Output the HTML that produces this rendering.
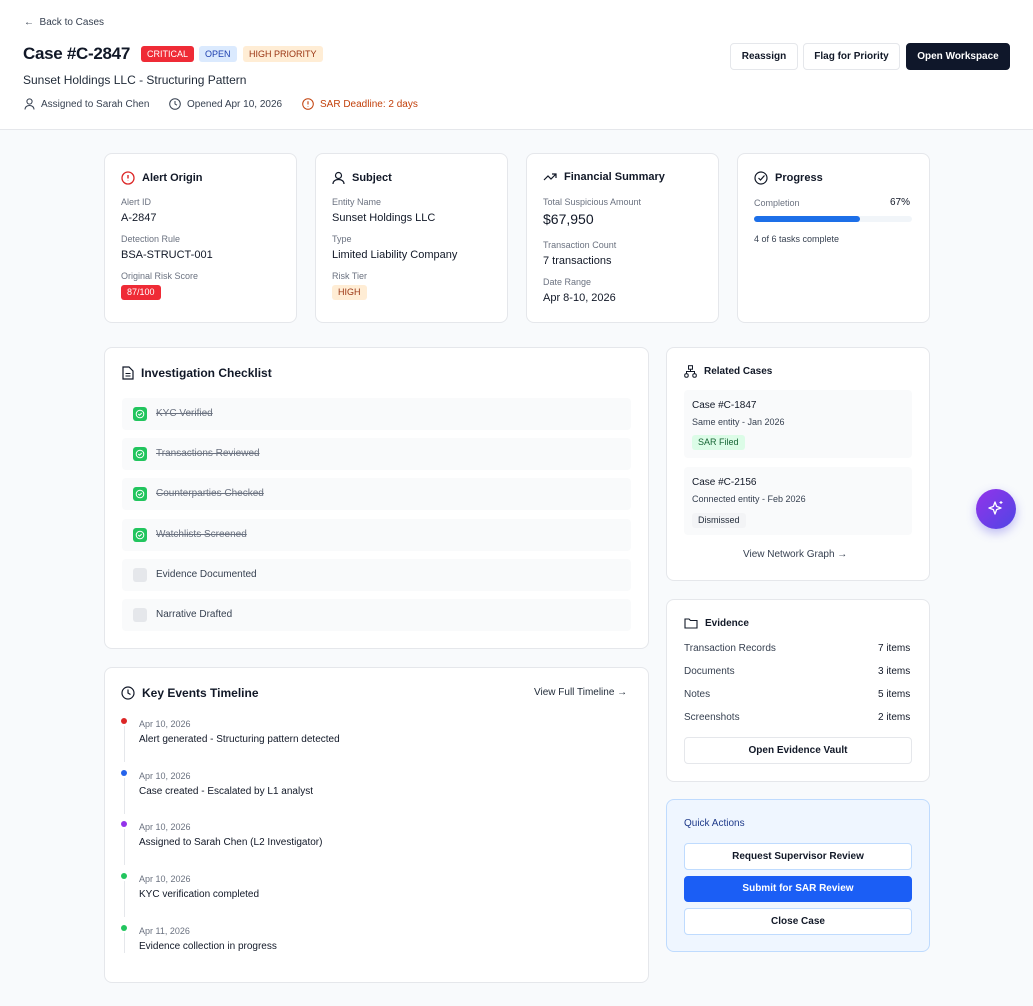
<!DOCTYPE html>
<html><head><meta charset="utf-8"><style>
*{box-sizing:border-box;margin:0;padding:0}
body{width:1033px;height:1006px;background:#f8fafc;font-family:"Liberation Sans",Arial,sans-serif;color:#111827;position:relative;overflow:hidden}
.a{position:absolute}
.hdr{left:0;top:0;width:1033px;height:130px;background:#fff;border-bottom:1px solid #e5e7eb}
.card{position:absolute;background:#fff;border:1px solid #e5e7eb;border-radius:8px}
.t{font-size:11px;color:#111827;white-space:nowrap;display:flex;align-items:center;gap:6px}
.lbl{font-size:9px;color:#6b7280;position:absolute;white-space:nowrap}
.val{font-size:11px;color:#111827;position:absolute;white-space:nowrap}
.h{font-size:11px;font-weight:bold;position:absolute;white-space:nowrap;display:flex;align-items:center;gap:7px}
.badge{position:absolute;font-size:9px;border-radius:3px;padding:0 6px;height:16px;line-height:16px}
.btn{position:absolute;border:1px solid #e5e7eb;border-radius:4px;background:#fff;font-size:10px;font-weight:bold;text-align:center}
.ci{position:absolute;left:122px;width:509px;height:32px;background:#f9fafb;border-radius:4px;font-size:10px;color:#374151}
.ci .b{position:absolute;left:11px;top:9px;width:14px;height:14px;border-radius:3px;background:#22c55e}
.ci .e{background:#e5e7eb}
.ci span{position:absolute;left:34px;top:0;line-height:32px}
.ci.d span{text-decoration:line-through;color:#6b7280}
svg{display:block}
</style></head><body>
<div class="a hdr"></div>
<div class="a" style="left:24px;top:17px;font-size:10px;color:#374151">&#8592;&nbsp;&nbsp;Back to Cases</div>
<div class="a" style="left:23px;top:44px;font-size:17px;font-weight:bold;letter-spacing:-0.3px">Case #C-2847</div>
<div class="badge" style="left:141px;top:46px;background:#ef2b36;color:#fff">CRITICAL</div>
<div class="badge" style="left:199px;top:46px;background:#dbeafe;color:#1e40af">OPEN</div>
<div class="badge" style="left:243px;top:46px;background:#ffedd5;color:#9a3412">HIGH PRIORITY</div>
<div class="a" style="left:23px;top:73px;font-size:12px;color:#1f2937">Sunset Holdings LLC - Structuring Pattern</div>
<div class="a t" style="left:24px;top:98px;font-size:10px;color:#374151"><svg width="11" height="12" viewBox="0 0 11 12"><circle cx="5.5" cy="3.5" r="2.6" fill="none" stroke="#374151"/><path d="M1 11.5c0-2.5 2-4 4.5-4s4.5 1.5 4.5 4" fill="none" stroke="#374151"/></svg>Assigned to Sarah Chen</div>
<div class="a t" style="left:169px;top:98px;font-size:10px;color:#374151"><svg width="12" height="12" viewBox="0 0 12 12"><circle cx="6" cy="6" r="5.3" fill="none" stroke="#374151"/><path d="M6 3v3l2 1.2" fill="none" stroke="#374151"/></svg>Opened Apr 10, 2026</div>
<div class="a t" style="left:302px;top:98px;font-size:10px;color:#c2410c"><svg width="12" height="12" viewBox="0 0 12 12"><circle cx="6" cy="6" r="5.3" fill="none" stroke="#c2410c"/><path d="M6 3.2v3.3M6 8.2v.6" stroke="#c2410c" stroke-width="1.1"/></svg>SAR Deadline: 2 days</div>
<div class="btn" style="left:730px;top:43px;width:68px;height:27px;line-height:25px">Reassign</div>
<div class="btn" style="left:803px;top:43px;width:97px;height:27px;line-height:25px">Flag for Priority</div>
<div class="btn" style="left:906px;top:43px;width:104px;height:27px;line-height:25px;background:#0f172a;color:#fff;border-color:#0f172a">Open Workspace</div>

<div class="card" style="left:104px;top:153px;width:193px;height:170px"></div>
<div class="h" style="left:121px;top:171px"><svg width="14" height="14" viewBox="0 0 14 14"><circle cx="7" cy="7" r="6" fill="none" stroke="#dc2626" stroke-width="1.3"/><path d="M7 4v3.5M7 9.5v.3" stroke="#dc2626" stroke-width="1.4"/></svg>Alert Origin</div>
<div class="lbl" style="left:121px;top:197px">Alert ID</div><div class="val" style="left:121px;top:212px">A-2847</div>
<div class="lbl" style="left:121px;top:234px">Detection Rule</div><div class="val" style="left:121px;top:249px">BSA-STRUCT-001</div>
<div class="lbl" style="left:121px;top:271px">Original Risk Score</div>
<div class="badge" style="left:121px;top:285px;background:#ef2b36;color:#fff;font-size:9px;height:15px;line-height:15px">87/100</div>

<div class="card" style="left:315px;top:153px;width:193px;height:170px"></div>
<div class="h" style="left:332px;top:171px"><svg width="13" height="14" viewBox="0 0 13 14"><circle cx="6.5" cy="4.5" r="3" fill="none" stroke="#111827" stroke-width="1.2"/><path d="M1 13c0-3 2.5-4.5 5.5-4.5S12 10 12 13" fill="none" stroke="#111827" stroke-width="1.2"/></svg>Subject</div>
<div class="lbl" style="left:332px;top:197px">Entity Name</div><div class="val" style="left:332px;top:212px">Sunset Holdings LLC</div>
<div class="lbl" style="left:332px;top:234px">Type</div><div class="val" style="left:332px;top:249px">Limited Liability Company</div>
<div class="lbl" style="left:332px;top:271px">Risk Tier</div>
<div class="badge" style="left:332px;top:285px;background:#ffedd5;color:#9a3412;height:15px;line-height:15px">HIGH</div>

<div class="card" style="left:526px;top:153px;width:193px;height:170px"></div>
<div class="h" style="left:543px;top:171px"><svg width="14" height="10" viewBox="0 0 14 10"><path d="M1 8l4-4 3 3 5-5M9 2h4v4" fill="none" stroke="#111827" stroke-width="1.2"/></svg>Financial Summary</div>
<div class="lbl" style="left:543px;top:197px">Total Suspicious Amount</div><div class="val" style="left:543px;top:211px;font-size:14px">$67,950</div>
<div class="lbl" style="left:543px;top:240px">Transaction Count</div><div class="val" style="left:543px;top:255px">7 transactions</div>
<div class="lbl" style="left:543px;top:277px">Date Range</div><div class="val" style="left:543px;top:292px">Apr 8-10, 2026</div>

<div class="card" style="left:737px;top:153px;width:193px;height:170px"></div>
<div class="h" style="left:754px;top:171px"><svg width="14" height="14" viewBox="0 0 14 14"><circle cx="7" cy="7" r="6" fill="none" stroke="#111827" stroke-width="1.2"/><path d="M4.5 7l2 2 4-4.5" fill="none" stroke="#111827" stroke-width="1.2"/></svg>Progress</div>
<div class="lbl" style="left:754px;top:198px">Completion</div><div class="val" style="left:890px;top:197px;font-size:10px">67%</div>
<div class="a" style="left:754px;top:216px;width:158px;height:6px;background:#f1f5f9;border-radius:3px"><div style="width:106px;height:6px;background:#1d6fe8;border-radius:3px"></div></div>
<div class="lbl" style="left:754px;top:234px;color:#374151">4 of 6 tasks complete</div>

<div class="card" style="left:104px;top:347px;width:545px;height:302px"></div>
<div class="h" style="left:122px;top:366px;font-size:12px"><svg width="12" height="14" viewBox="0 0 12 14"><path d="M1 1h6l4 4v8H1z" fill="none" stroke="#111827" stroke-width="1.2"/><path d="M3.5 7.5h5M3.5 10h5" stroke="#111827" stroke-width="1.1"/></svg>Investigation Checklist</div>
<div class="ci d" style="top:398px"><div class="b"><svg width="14" height="14" viewBox="0 0 14 14"><circle cx="7" cy="7" r="3.8" fill="none" stroke="#fff" stroke-width="1"/><path d="M5.3 7l1.2 1.2 2.2-2.2" fill="none" stroke="#fff"/></svg></div><span>KYC Verified</span></div>
<div class="ci d" style="top:438px"><div class="b"><svg width="14" height="14" viewBox="0 0 14 14"><circle cx="7" cy="7" r="3.8" fill="none" stroke="#fff" stroke-width="1"/><path d="M5.3 7l1.2 1.2 2.2-2.2" fill="none" stroke="#fff"/></svg></div><span>Transactions Reviewed</span></div>
<div class="ci d" style="top:478px"><div class="b"><svg width="14" height="14" viewBox="0 0 14 14"><circle cx="7" cy="7" r="3.8" fill="none" stroke="#fff" stroke-width="1"/><path d="M5.3 7l1.2 1.2 2.2-2.2" fill="none" stroke="#fff"/></svg></div><span>Counterparties Checked</span></div>
<div class="ci d" style="top:519px"><div class="b"><svg width="14" height="14" viewBox="0 0 14 14"><circle cx="7" cy="7" r="3.8" fill="none" stroke="#fff" stroke-width="1"/><path d="M5.3 7l1.2 1.2 2.2-2.2" fill="none" stroke="#fff"/></svg></div><span>Watchlists Screened</span></div>
<div class="ci" style="top:559px"><div class="b e"></div><span>Evidence Documented</span></div>
<div class="ci" style="top:599px"><div class="b e"></div><span>Narrative Drafted</span></div>

<div class="card" style="left:104px;top:667px;width:545px;height:316px"></div>
<div class="h" style="left:121px;top:686px;font-size:12px"><svg width="14" height="14" viewBox="0 0 14 14"><circle cx="7" cy="7" r="6" fill="none" stroke="#111827" stroke-width="1.2"/><path d="M7 3.5V7l2.5 1.5" fill="none" stroke="#111827" stroke-width="1.2"/></svg>Key Events Timeline</div>
<div class="a" style="left:534px;top:687px;font-size:10px;color:#1f2937">View Full Timeline &#8594;</div>
<div class="a" style="left:124px;top:726px;width:1px;height:36px;background:#e5e7eb"></div>
<div class="a" style="left:124px;top:778px;width:1px;height:36px;background:#e5e7eb"></div>
<div class="a" style="left:124px;top:829px;width:1px;height:36px;background:#e5e7eb"></div>
<div class="a" style="left:124px;top:881px;width:1px;height:36px;background:#e5e7eb"></div>
<div class="a" style="left:124px;top:933px;width:1px;height:20px;background:#e5e7eb"></div>
<div class="a" style="left:121px;top:718px;width:6px;height:6px;border-radius:3px;background:#dc2626"></div>
<div class="a" style="left:121px;top:770px;width:6px;height:6px;border-radius:3px;background:#2563eb"></div>
<div class="a" style="left:121px;top:821px;width:6px;height:6px;border-radius:3px;background:#9333ea"></div>
<div class="a" style="left:121px;top:873px;width:6px;height:6px;border-radius:3px;background:#22c55e"></div>
<div class="a" style="left:121px;top:925px;width:6px;height:6px;border-radius:3px;background:#22c55e"></div>
<div class="lbl" style="left:139px;top:719px">Apr 10, 2026</div><div class="val" style="left:139px;top:734px;font-size:10px">Alert generated - Structuring pattern detected</div>
<div class="lbl" style="left:139px;top:771px">Apr 10, 2026</div><div class="val" style="left:139px;top:786px;font-size:10px">Case created - Escalated by L1 analyst</div>
<div class="lbl" style="left:139px;top:822px">Apr 10, 2026</div><div class="val" style="left:139px;top:837px;font-size:10px">Assigned to Sarah Chen (L2 Investigator)</div>
<div class="lbl" style="left:139px;top:874px">Apr 10, 2026</div><div class="val" style="left:139px;top:889px;font-size:10px">KYC verification completed</div>
<div class="lbl" style="left:139px;top:926px">Apr 11, 2026</div><div class="val" style="left:139px;top:941px;font-size:10px">Evidence collection in progress</div>

<div class="card" style="left:666px;top:347px;width:264px;height:234px"></div>
<div class="h" style="left:684px;top:365px;font-size:10px"><svg width="13" height="13" viewBox="0 0 13 13"><rect x="4.5" y="0.7" width="4" height="3.5" fill="none" stroke="#111827"/><rect x="0.7" y="8.8" width="3.5" height="3.5" rx="1.5" fill="none" stroke="#111827"/><rect x="8.8" y="8.8" width="3.5" height="3.5" rx="1.5" fill="none" stroke="#111827"/><path d="M6.5 4.2v2.3M2.5 8.8V6.5h8v2.3" fill="none" stroke="#111827"/></svg>Related Cases</div>
<div class="a" style="left:684px;top:390px;width:228px;height:68px;background:#f9fafb;border-radius:4px"></div>
<div class="val" style="left:692px;top:400px;font-size:10px">Case #C-1847</div>
<div class="lbl" style="left:692px;top:417px;color:#374151">Same entity - Jan 2026</div>
<div class="badge" style="left:692px;top:435px;background:#dcfce7;color:#166534;font-size:9px;height:15px;line-height:15px">SAR Filed</div>
<div class="a" style="left:684px;top:467px;width:228px;height:68px;background:#f9fafb;border-radius:4px"></div>
<div class="val" style="left:692px;top:477px;font-size:10px">Case #C-2156</div>
<div class="lbl" style="left:692px;top:494px;color:#374151">Connected entity - Feb 2026</div>
<div class="badge" style="left:692px;top:513px;background:#f3f4f6;color:#1f2937;font-size:9px;height:15px;line-height:15px">Dismissed</div>
<div class="a" style="left:743px;top:549px;font-size:10px;color:#374151">View Network Graph &#8594;</div>

<div class="card" style="left:666px;top:599px;width:264px;height:183px"></div>
<div class="h" style="left:684px;top:617px;font-size:10px"><svg width="14" height="12" viewBox="0 0 14 12"><path d="M1 2h4l1.5 1.5H13V11H1z" fill="none" stroke="#111827" stroke-width="1.1"/></svg>Evidence</div>
<div class="val" style="left:684px;top:643px;font-size:10px;color:#374151">Transaction Records</div><div class="val" style="left:878px;top:643px;font-size:10px">7 items</div>
<div class="val" style="left:684px;top:666px;font-size:10px;color:#374151">Documents</div><div class="val" style="left:878px;top:666px;font-size:10px">3 items</div>
<div class="val" style="left:684px;top:689px;font-size:10px;color:#374151">Notes</div><div class="val" style="left:878px;top:689px;font-size:10px">5 items</div>
<div class="val" style="left:684px;top:712px;font-size:10px;color:#374151">Screenshots</div><div class="val" style="left:878px;top:712px;font-size:10px">2 items</div>
<div class="btn" style="left:684px;top:737px;width:228px;height:27px;line-height:25px">Open Evidence Vault</div>

<div class="card" style="left:666px;top:799px;width:264px;height:153px;background:#eff6ff;border-color:#bfdbfe"></div>
<div class="a" style="left:684px;top:818px;font-size:10px;color:#1e3a8a">Quick Actions</div>
<div class="btn" style="left:684px;top:843px;width:228px;height:27px;line-height:25px;border-color:#bfdbfe">Request Supervisor Review</div>
<div class="btn" style="left:684px;top:876px;width:228px;height:26px;line-height:24px;background:#1b5ef5;color:#fff;border-color:#1b5ef5">Submit for SAR Review</div>
<div class="btn" style="left:684px;top:908px;width:228px;height:27px;line-height:25px;border-color:#bfdbfe">Close Case</div>

<div class="a" style="left:976px;top:489px;width:40px;height:40px;border-radius:20px;background:linear-gradient(135deg,#9333ea,#4f46e5);box-shadow:0 4px 10px rgba(79,70,229,.35)"><svg width="40" height="40" viewBox="0 0 40 40"><path d="M19 13l1.6 4.4L25 19l-4.4 1.6L19 25l-1.6-4.4L13 19l4.4-1.6z" fill="none" stroke="#fff" stroke-width="1.3" stroke-linejoin="round"/><path d="M25 12v3M23.5 13.5h3" stroke="#fff" stroke-width="1.1"/></svg></div>
</body></html>
